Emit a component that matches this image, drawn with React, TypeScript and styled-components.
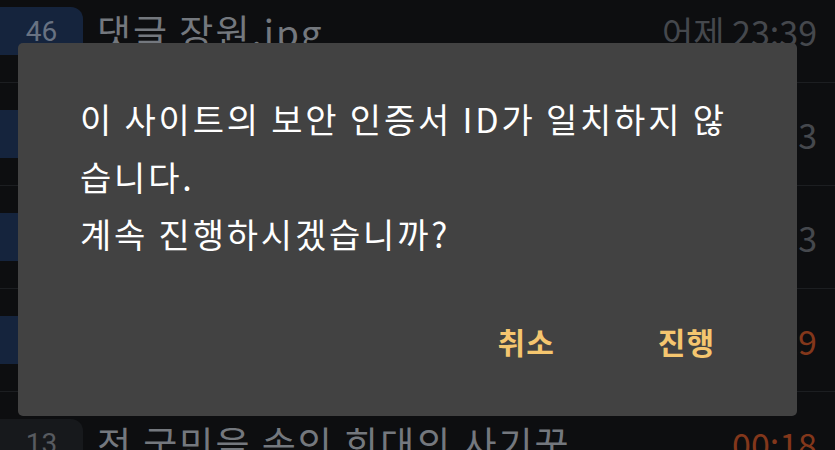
import React from 'react';
import styled, { createGlobalStyle } from 'styled-components';

const GlobalStyle = createGlobalStyle`
  html, body {
    margin: 0;
    padding: 0;
    background: #0d0e10;
    overflow: hidden;
  }
  body {
    font-family: "Noto Sans CJK KR", "Noto Sans", sans-serif;
  }
`;

const Screen = styled.div`
  position: relative;
  width: 835px;
  height: 450px;
  overflow: hidden;
  background: #0d0e10;
`;

const List = styled.ul`
  list-style: none;
  margin: -20px 0 0;
  padding: 0;
`;

const Row = styled.li`
  display: grid;
  grid-template-columns: 83px 1fr auto;
  align-items: center;
  column-gap: 14px;
  height: 103px;
  padding-right: 18px;
  border-bottom: 1px solid #1c1e21;
  box-sizing: border-box;
`;

const Badge = styled.span<{ $unread: boolean }>`
  display: flex;
  align-items: center;
  justify-content: center;
  height: 48px;
  border-radius: 0 12px 12px 0;
  background: ${({ $unread }) => ($unread ? '#15243d' : '#17191c')};
  color: ${({ $unread }) => ($unread ? '#687282' : '#585b60')};
  font-family: Roboto, "Noto Sans", sans-serif;
  font-size: 28px;
`;

const Title = styled.span`
  color: #74787e;
  font-size: 37px;
  letter-spacing: 2px;
  white-space: nowrap;
  overflow: hidden;
`;

const Time = styled.span<{ $fresh: boolean }>`
  color: ${({ $fresh }) => ($fresh ? '#83371b' : '#45484d')};
  font-size: 34px;
  white-space: nowrap;
`;

const Overlay = styled.div`
  position: absolute;
  inset: 0;
  display: flex;
  align-items: flex-start;
  padding: 43px 0 0 18px;
`;

const Dialog = styled.div`
  width: 779px;
  height: 373px;
  box-sizing: border-box;
  padding: 47px 40px 0 62px;
  background: #424242;
  border-radius: 5px;
  display: flex;
  flex-direction: column;
`;

const Message = styled.p`
  margin: 0;
  width: 662px;
  color: #ffffff;
  font-size: 34px;
  line-height: 57.5px;
  letter-spacing: 2.8px;
  word-break: break-all;
  white-space: pre-line;
`;

const Actions = styled.div`
  display: flex;
  justify-content: flex-end;
  gap: 63px;
  margin-top: 48px;
  padding-right: 22px;
`;

const ActionButton = styled.button`
  border: none;
  background: transparent;
  padding: 12px 20px;
  color: #f5c66f;
  font-family: "Noto Sans CJK KR", sans-serif;
  font-size: 30px;
  font-weight: 700;
  line-height: 36px;
  letter-spacing: 1px;
  cursor: pointer;
`;

type Item = { count: string; unread: boolean; title: string; time: string; fresh: boolean };

const items: Item[] = [
  { count: '46', unread: true, title: '댓글 장원.jpg', time: '어제 23:39', fresh: false },
  { count: '31', unread: true, title: '오늘의 유머 모음', time: '어제 22:23', fresh: false },
  { count: '27', unread: true, title: '퇴근길 풍경', time: '어제 21:13', fresh: false },
  { count: '8', unread: true, title: '실시간 이슈', time: '00:29', fresh: true },
  { count: '13', unread: false, title: '전 국민을 속인 희대의 사기꾼', time: '00:18', fresh: true },
];

export default function App() {
  return (
    <>
      <GlobalStyle />
      <Screen>
        <List>
          {items.map((it) => (
            <Row key={it.title}>
              <Badge $unread={it.unread}>{it.count}</Badge>
              <Title>{it.title}</Title>
              <Time $fresh={it.fresh}>{it.time}</Time>
            </Row>
          ))}
        </List>
        <Overlay>
          <Dialog role="alertdialog">
            <Message>{'이 사이트의 보안 인증서 ID가 일치하지 않습니다.\n계속 진행하시겠습니까?'}</Message>
            <Actions>
              <ActionButton>취소</ActionButton>
              <ActionButton>진행</ActionButton>
            </Actions>
          </Dialog>
        </Overlay>
      </Screen>
    </>
  );
}
